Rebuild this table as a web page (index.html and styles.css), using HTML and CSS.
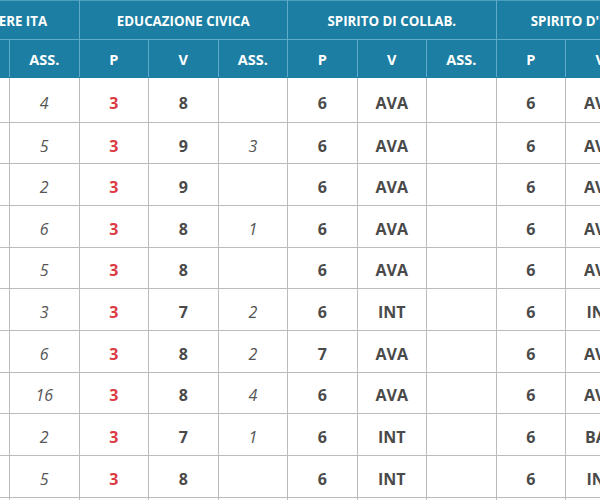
FILE: index.html
```html
<!DOCTYPE html>
<html lang="it">
<head>
<meta charset="utf-8">
<title>Voti</title>
<link rel="stylesheet" href="styles.css">
</head>
<body>
<div class="viewport">
<table class="grid">
<colgroup>
<col class="c"><col class="c"><col class="c"><col class="c"><col class="c"><col class="c"><col class="c"><col class="c"><col class="c"><col class="c"><col class="c"><col class="c">
</colgroup>
<thead>
<tr class="h1">
<th colspan="3">LINGUA E LETTERE ITA</th>
<th colspan="3">EDUCAZIONE CIVICA</th>
<th colspan="3">SPIRITO DI COLLAB.</th>
<th colspan="3">SPIRITO D'INIZIATIVA</th>
</tr>
<tr class="h2">
<th>P</th><th>V</th><th>ASS.</th>
<th>P</th><th>V</th><th>ASS.</th>
<th>P</th><th>V</th><th>ASS.</th>
<th>P</th><th>V</th><th>ASS.</th>
</tr>
</thead>
<tbody>
<tr class="first"><td class="p">3</td><td class="v">7</td><td class="a">4</td><td class="p">3</td><td class="v">8</td><td class="a"></td><td class="v">6</td><td class="v">AVA</td><td class="a"></td><td class="v">6</td><td class="v">AVA</td><td class="a"></td></tr>
<tr><td class="p">3</td><td class="v">7</td><td class="a">5</td><td class="p">3</td><td class="v">9</td><td class="a">3</td><td class="v">6</td><td class="v">AVA</td><td class="a"></td><td class="v">6</td><td class="v">AVA</td><td class="a"></td></tr>
<tr><td class="p">3</td><td class="v">7</td><td class="a">2</td><td class="p">3</td><td class="v">9</td><td class="a"></td><td class="v">6</td><td class="v">AVA</td><td class="a"></td><td class="v">6</td><td class="v">AVA</td><td class="a"></td></tr>
<tr><td class="p">3</td><td class="v">7</td><td class="a">6</td><td class="p">3</td><td class="v">8</td><td class="a">1</td><td class="v">6</td><td class="v">AVA</td><td class="a"></td><td class="v">6</td><td class="v">AVA</td><td class="a"></td></tr>
<tr><td class="p">3</td><td class="v">7</td><td class="a">5</td><td class="p">3</td><td class="v">8</td><td class="a"></td><td class="v">6</td><td class="v">AVA</td><td class="a"></td><td class="v">6</td><td class="v">AVA</td><td class="a"></td></tr>
<tr><td class="p">3</td><td class="v">6</td><td class="a">3</td><td class="p">3</td><td class="v">7</td><td class="a">2</td><td class="v">6</td><td class="v">INT</td><td class="a"></td><td class="v">6</td><td class="v">INT</td><td class="a"></td></tr>
<tr><td class="p">3</td><td class="v">7</td><td class="a">6</td><td class="p">3</td><td class="v">8</td><td class="a">2</td><td class="v">7</td><td class="v">AVA</td><td class="a"></td><td class="v">6</td><td class="v">AVA</td><td class="a"></td></tr>
<tr><td class="p">3</td><td class="v">6</td><td class="a">16</td><td class="p">3</td><td class="v">8</td><td class="a">4</td><td class="v">6</td><td class="v">AVA</td><td class="a"></td><td class="v">6</td><td class="v">AVA</td><td class="a"></td></tr>
<tr><td class="p">3</td><td class="v">6</td><td class="a">2</td><td class="p">3</td><td class="v">7</td><td class="a">1</td><td class="v">6</td><td class="v">INT</td><td class="a"></td><td class="v">6</td><td class="v">BAS</td><td class="a"></td></tr>
<tr><td class="p">3</td><td class="v">7</td><td class="a">5</td><td class="p">3</td><td class="v">8</td><td class="a"></td><td class="v">6</td><td class="v">INT</td><td class="a"></td><td class="v">6</td><td class="v">INT</td><td class="a"></td></tr>
<tr><td class="p">3</td><td class="v">7</td><td class="a">4</td><td class="p">3</td><td class="v">8</td><td class="a"></td><td class="v">6</td><td class="v">AVA</td><td class="a"></td><td class="v">6</td><td class="v">AVA</td><td class="a"></td></tr>
</tbody>
</table>
</div>
</body>
</html>
```

FILE: styles.css
```css
html, body {
  margin: 0;
  padding: 0;
  background: #ffffff;
}

.viewport {
  width: 600px;
  height: 500px;
  overflow: hidden;
}

.grid {
  margin-left: -130px;
  border-collapse: collapse;
  table-layout: fixed;
  width: 834px;
  font-family: "Open Sans", "Noto Sans", sans-serif;
}

.grid .c {
  width: 69.5px;
}

.grid th {
  background: #1b7ea2;
  color: #ffffff;
  font-weight: 700;
  font-size: 13.3px;
  border: 1px solid #5fabca;
  padding: 0;
  text-align: center;
  white-space: nowrap;
  overflow: hidden;
}

.grid .h1 th {
  height: 36px;
  padding-top: 2px;
  border-top-color: #4d9fc0;
}

.grid .h2 th {
  height: 36px;
  padding-top: 1px;
  font-size: 14.5px;
  border-bottom-color: #1b7ea2;
}

.grid td {
  height: 35.67px;
  padding: 5px 0 0;
  border: 1px solid #bcbcbc;
  text-align: center;
  font-size: 16px;
  color: #4a4a4a;
}

.grid .first td {
  height: 36.7px;
  padding-top: 7px;
}

.grid td.p {
  color: #dc3b44;
  font-weight: 700;
}

.grid td.v {
  font-weight: 700;
  color: #4a4a4a;
}

.grid td.a {
  font-style: italic;
  color: #555555;
}
```
